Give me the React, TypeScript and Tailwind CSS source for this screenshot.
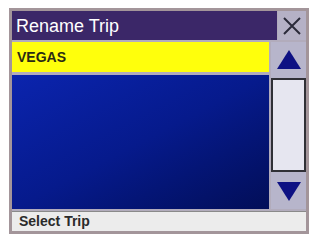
import React from 'react';

const font = { fontFamily: '"Liberation Sans", Arial, sans-serif' };

function Arrow({ down }: { down?: boolean }) {
  return (
    <svg width="26" height="22" viewBox="0 0 26 22">
      <polygon
        points={down ? '1,2 25,2 13,21' : '13,1 25,20 1,20'}
        fill="#0e1183"
      />
    </svg>
  );
}

export default function App() {
  return (
    <div className="h-[235px] w-[312px] bg-white pl-[9px] pt-[8px]" style={font}>
      <div className="flex h-[226px] w-[300px] flex-col gap-[2px] border-[3px] border-[#a3959a] bg-[#b2acbc]">
        {/* title */}
        <div className="flex h-[29px] gap-[1px]">
          <div className="flex flex-1 items-center bg-[#3b2768] pl-[4px] text-[18px] leading-none text-white">
            Rename Trip
          </div>
          <div className="flex w-[28px] items-center justify-center bg-[#b5b1c6]">
            <svg width="20" height="20" viewBox="0 0 20 20">
              <path d="M2 2 L18 18 M18 2 L2 18" stroke="#2a2a3a" strokeWidth="2" />
            </svg>
          </div>
        </div>

        <div className="flex flex-1 gap-[2px]">
          <div className="flex flex-1 flex-col gap-[3px]">
            <div className="flex h-[30px] items-center bg-[#ffff0c] pl-[5px] text-[14px] font-bold text-[#2b2b14]">
              VEGAS
            </div>
            <div className="flex-1 bg-gradient-to-br from-[#0b24ae] via-[#061a8c] to-[#020e58]" />
          </div>
          <div className="flex w-[35px] flex-col">
            <div className="flex h-[36px] items-center justify-center bg-[#b7b5cb]">
              <Arrow />
            </div>
            <div className="flex-1 border-[2px] border-[#303036] bg-[#e6e6f0]" />
            <div className="flex h-[37px] items-center justify-center bg-[#b7b5cb]">
              <Arrow down />
            </div>
          </div>
        </div>

        <div className="flex h-[20px] items-center border-t border-[#8a8a8a] bg-[#ececec] pl-[7px] text-[14px] font-bold text-[#2a2a2a]">
          Select Trip
        </div>
      </div>
    </div>
  );
}
